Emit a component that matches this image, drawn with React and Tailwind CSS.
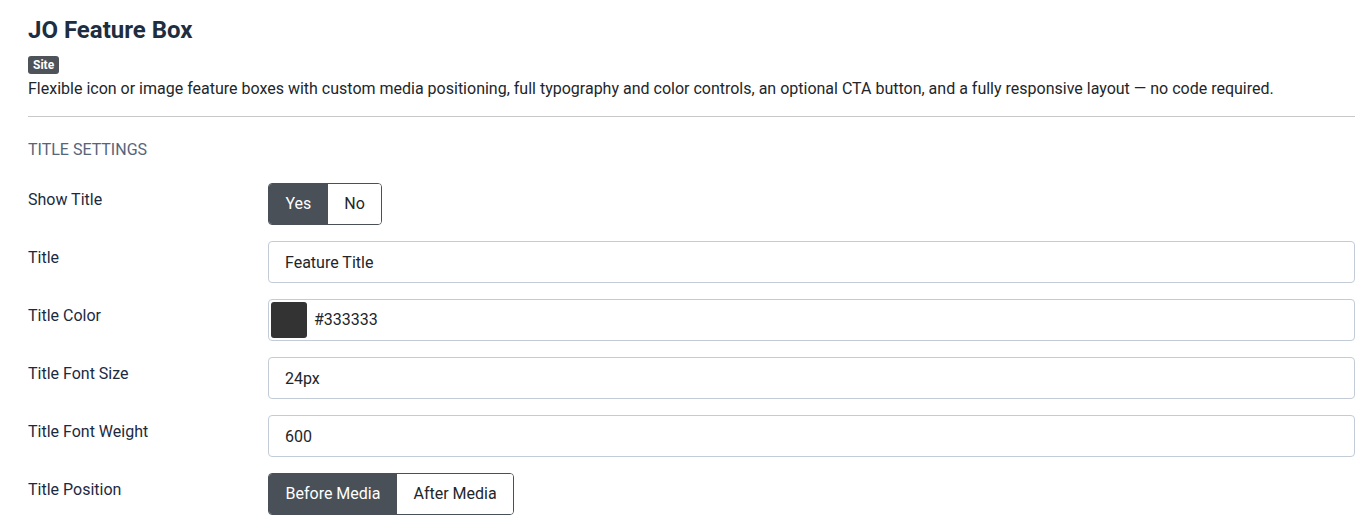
import { useState } from "react";

function Row({ label, children }) {
  return (
    <div className="flex items-start mb-4">
      <div className="w-[240px] shrink-0 pt-[5px] text-[16px] leading-6 text-[#1c2a3f]">{label}</div>
      <div className="flex-1">{children}</div>
    </div>
  );
}

function Toggle({ options, value, onChange }) {
  return (
    <div className="inline-flex rounded-[4px] border border-[#495057] overflow-hidden">
      {options.map((opt) => (
        <button
          key={opt}
          onClick={() => onChange(opt)}
          className={
            "h-[40px] px-[16.5px] text-[16px] " +
            (value === opt ? "bg-[#495057] text-white" : "bg-white text-[#22262a]")
          }
        >
          {opt}
        </button>
      ))}
    </div>
  );
}

function TextInput({ value }) {
  return (
    <input
      defaultValue={value}
      className="w-full h-[42px] px-4 rounded-[4px] border border-[#c3ccd6] bg-white text-[16px] text-[#22262a] outline-none"
    />
  );
}

export default function App() {
  const [showTitle, setShowTitle] = useState("Yes");
  const [position, setPosition] = useState("Before Media");

  return (
    <div className="bg-white min-h-[530px] pl-[28px] pr-[15px] pt-[16px] font-['Roboto',sans-serif]">
      <h1 className="text-[24px] font-bold leading-7 text-[#1f2d40]">JO Feature Box</h1>
      <div className="mt-[12px] flex">
        <span className="h-[18px] px-[5px] flex items-center rounded-[3px] bg-[#4d5359] text-white text-[12px] font-bold">Site</span>
      </div>
      <p className="text-[16px] leading-6 text-[#22262a] mt-[3px]">
        Flexible icon or image feature boxes with custom media positioning, full typography and color controls, an optional CTA button, and a fully responsive layout — no code required.
      </p>
      <hr className="mt-[15px] border-t border-[#c8c8c8]" />

      <div className="mt-[21px] mb-[21px] text-[16px] leading-6 uppercase text-[#56657a]">Title Settings</div>

      <Row label="Show Title">
        <Toggle options={["Yes", "No"]} value={showTitle} onChange={setShowTitle} />
      </Row>
      <Row label="Title">
        <TextInput value="Feature Title" />
      </Row>
      <Row label="Title Color">
        <div className="w-full h-[42px] pl-[2px] pr-4 rounded-[4px] border border-[#c3ccd6] bg-white flex items-center gap-[7px]">
          <div className="w-[36px] h-[36px] rounded-[3px] bg-[#333333]" />
          <span className="text-[16px] text-[#22262a]">#333333</span>
        </div>
      </Row>
      <Row label="Title Font Size">
        <TextInput value="24px" />
      </Row>
      <Row label="Title Font Weight">
        <TextInput value="600" />
      </Row>
      <Row label="Title Position">
        <Toggle options={["Before Media", "After Media"]} value={position} onChange={setPosition} />
      </Row>
    </div>
  );
}
